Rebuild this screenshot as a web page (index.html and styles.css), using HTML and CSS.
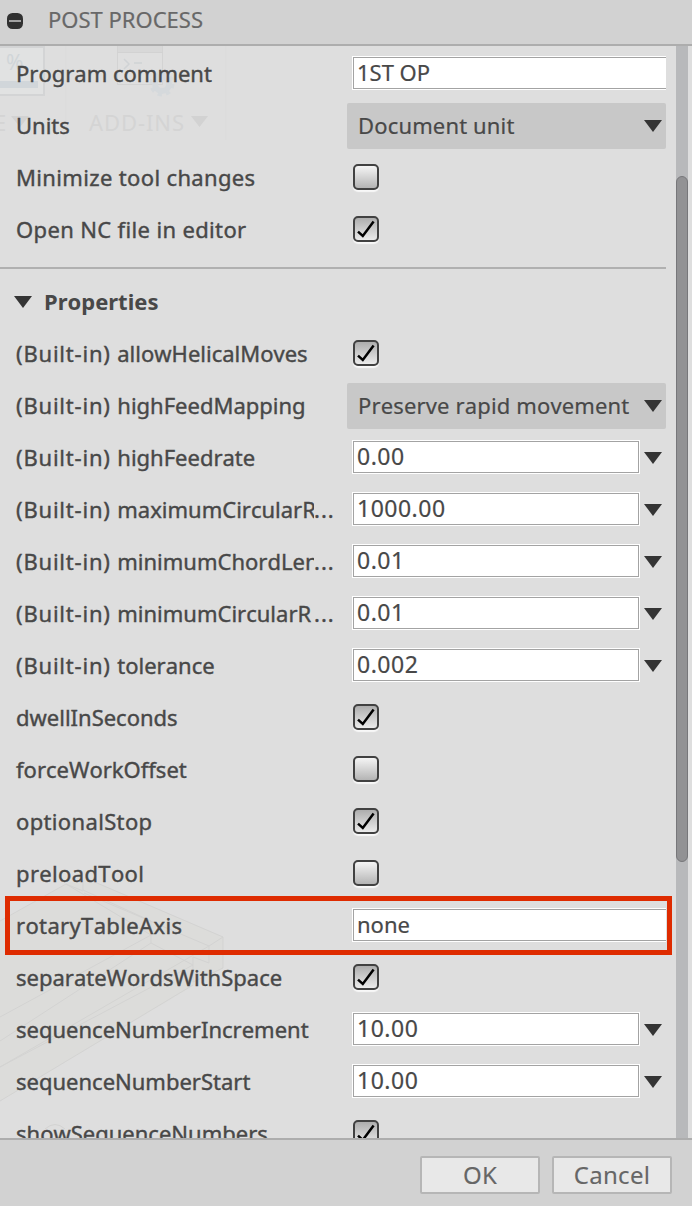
FILE: index.html
```html
<!DOCTYPE html>
<html lang="en">
<head>
    <meta charset="UTF-8">
    <meta name="viewport" content="width=device-width, initial-scale=1.0">
    <title>Post Process</title>
    <link rel="stylesheet" href="styles.css">
</head>
<body>

    <!-- Shared shapes -->
    <svg class="defs" width="0" height="0">
        <symbol id="arrow" viewBox="0 0 18 12"><path d="M0 0H18L9 12Z" fill="#343434"/></symbol>
        <symbol id="check" viewBox="0 0 22 22"><path d="M3 13.6L7.8 18L18.6 3.4" fill="none" stroke="#000" stroke-width="2.5"/></symbol>
    </svg>

    <div class="dialog">

        <!-- Header -->
        <div class="header">
            <svg class="collapse" width="16" height="16" viewBox="0 0 16 16">
                <rect width="16" height="16" rx="5.5" fill="#313131"/>
                <rect x="2" y="7" width="12" height="2" fill="#a2a2a2"/>
            </svg>
            <h1>POST PROCESS</h1>
        </div>

        <!-- Scrolling content -->
        <div class="content">

            <!-- Toolbar and model showing through the panel -->
            <svg class="ghost" width="676" height="1092" viewBox="0 46 676 1092">
                <path d="M0 47H44V95H0" fill="#e1e2e2" stroke="#d3d4d5" stroke-width="2"/>
                <rect y="81" width="38" height="7" fill="#d1d6da"/>
                <text x="6" y="70" font-size="21" fill="#d0d5d8">%</text>
                <path d="M66 46V140M226 46V140" stroke="#dbdbdb"/>
                <path d="M117.500 46V84.500H162.500V46" fill="#dfdfdf" stroke="#d3d3d3"/>
                <rect x="118" y="46" width="44" height="6" fill="#d8d8d8"/>
                <path d="M117 52.500H163" stroke="#d2d2d2"/>
                <path d="M124 59L129 64L124 69M134 63H142" fill="none" stroke="#d0d3d5" stroke-width="1.500"/>
                <circle cx="162" cy="84" r="7" fill="none" stroke="#d5d9dc" stroke-width="6"/>
                <circle cx="162" cy="84" r="11" fill="none" stroke="#d5d9dc" stroke-width="3" stroke-dasharray="4.320 4.320"/>
                <text x="-6" y="131" font-size="22" fill="#d4d4d4">E</text>
                <path d="M11 116H29L20 127ZM191 116H208L199.500 127Z" fill="#d2d2d2"/>
                <text x="89" y="131" font-size="22" textLength="95" fill="#d4d4d4">ADD-INS</text>
                <path d="M0 921L70 882L90 880L223 937V968L0 1101Z" fill="#dcdcda"/>
                <path d="M0 921L66 884L151 935L0 1017M83 880V890L151 921V943L0 1041M90 880L223 937V968M66 884L83 891M84 893L209 946V963L193 957M223 937L209 946L0 1067M151 943L193 965L0 1067M193 957V982L223 968M193 985L0 1101M45 1129Q55 1120 65 1129" fill="none" stroke="#d3d3d2"/>
            </svg>

            <div class="group">
                <div class="row">
                    <label>Program comment</label>
                    <div class="input wide"><span>1ST OP</span></div>
                </div>
                <div class="row">
                    <label>Units</label>
                    <div class="select"><span>Document unit</span><svg class="arrow"><use href="#arrow"/></svg></div>
                </div>
                <div class="row">
                    <label class="loose">Minimize tool changes</label>
                    <div class="checkbox"></div>
                </div>
                <div class="row">
                    <label class="loose">Open NC file in editor</label>
                    <div class="checkbox checked"><svg><use href="#check"/></svg></div>
                </div>
            </div>

            <div class="group properties">
                <div class="row title">
                    <svg class="arrow"><use href="#arrow"/></svg>
                    <h2>Properties</h2>
                </div>
                <div class="row">
                    <label><b>(Built-in) </b>allowHelicalMoves</label>
                    <div class="checkbox checked"><svg><use href="#check"/></svg></div>
                </div>
                <div class="row">
                    <label><b>(Built-in) </b>highFeedMapping</label>
                    <div class="select"><span>Preserve rapid movement</span><svg class="arrow"><use href="#arrow"/></svg></div>
                </div>
                <div class="row">
                    <label><b>(Built-in) </b>highFeedrate</label>
                    <div class="input number"><span>0.00</span></div>
                    <svg class="arrow"><use href="#arrow"/></svg>
                </div>
                <div class="row">
                    <label class="cut"><span><b>(Built-in) </b>maximumCircularR</span><i>...</i></label>
                    <div class="input number"><span>1000.00</span></div>
                    <svg class="arrow"><use href="#arrow"/></svg>
                </div>
                <div class="row">
                    <label class="cut"><span><b>(Built-in) </b>minimumChordLen</span><i>...</i></label>
                    <div class="input number"><span>0.01</span></div>
                    <svg class="arrow"><use href="#arrow"/></svg>
                </div>
                <div class="row">
                    <label class="cut"><span><b>(Built-in) </b>minimumCircularR</span><i>...</i></label>
                    <div class="input number"><span>0.01</span></div>
                    <svg class="arrow"><use href="#arrow"/></svg>
                </div>
                <div class="row">
                    <label><b>(Built-in) </b>tolerance</label>
                    <div class="input number"><span>0.002</span></div>
                    <svg class="arrow"><use href="#arrow"/></svg>
                </div>
                <div class="row">
                    <label>dwellInSeconds</label>
                    <div class="checkbox checked"><svg><use href="#check"/></svg></div>
                </div>
                <div class="row">
                    <label>forceWorkOffset</label>
                    <div class="checkbox"></div>
                </div>
                <div class="row">
                    <label class="loose">optionalStop</label>
                    <div class="checkbox checked"><svg><use href="#check"/></svg></div>
                </div>
                <div class="row">
                    <label class="loose">preloadTool</label>
                    <div class="checkbox"></div>
                </div>
                <div class="row highlight">
                    <label class="loose">rotaryTableAxis</label>
                    <div class="input wide"><span>none</span></div>
                </div>
                <div class="row">
                    <label>separateWordsWithSpace</label>
                    <div class="checkbox checked"><svg><use href="#check"/></svg></div>
                </div>
                <div class="row">
                    <label>sequenceNumberIncrement</label>
                    <div class="input number"><span>10.00</span></div>
                    <svg class="arrow"><use href="#arrow"/></svg>
                </div>
                <div class="row">
                    <label>sequenceNumberStart</label>
                    <div class="input number"><span>10.00</span></div>
                    <svg class="arrow"><use href="#arrow"/></svg>
                </div>
                <div class="row">
                    <label>showSequenceNumbers</label>
                    <div class="checkbox checked"><svg><use href="#check"/></svg></div>
                </div>
            </div>

            <div class="scrollbar"><div class="thumb"></div></div>
        </div>

        <!-- Footer -->
        <div class="footer">
            <div class="button">OK</div>
            <div class="button">Cancel</div>
        </div>
    </div>

</body>
</html>
```
FILE: styles.css
```css
* {
    box-sizing: border-box;
}
body {
    margin: 0;
    font-family: "Noto Sans", "Open Sans", sans-serif;
    font-size: 22px;
    font-kerning: none;
    color: #484848;
    background-color: #dedede;
}
.defs {
    display: none;
}
.dialog {
    display: flex;
    flex-direction: column;
    width: 692px;
    height: 1206px;
    overflow: hidden;
}
.header {
    display: flex;
    align-items: center;
    height: 46px;
    padding: 0 0 4px 7px;
    background-color: #d2d2d2;
    border-bottom: 2px solid #adadad;
}
.collapse {
    margin-top: 2px;
}
.header h1 {
    margin: 0 0 2px 25px;
    font-size: 22px;
    font-weight: normal;
    color: #686868;
    -webkit-text-stroke: 0.2px #686868;
}
.content {
    position: relative;
    height: 1092px;
    padding-top: 2px;
    overflow: hidden;
}
.ghost {
    position: absolute;
    top: 0;
    left: 0;
}
.group {
    position: relative;
    width: 666px;
}
.properties {
    margin-top: 11px;
    padding-top: 7px;
    border-top: 2px solid #b0b0b0;
}
.row {
    display: flex;
    align-items: center;
    height: 52px;
    padding-left: 16px;
    white-space: nowrap;
}
.row label {
    flex: none;
    width: 336px;
    padding-bottom: 2px;
    -webkit-text-stroke: 0.4px #484848;
}
.row label b {
    font-weight: normal;
    letter-spacing: 0.8px;
}
.row .loose {
    letter-spacing: 0.35px;
}
.row .cut {
    display: flex;
}
.cut span {
    width: 298px;
    overflow: hidden;
}
.cut i {
    font-style: normal;
    letter-spacing: 1px;
}
.title {
    padding-left: 14px;
}
.title h2 {
    margin: 0 0 2px 12px;
    font-size: 22px;
    font-weight: bold;
}
.arrow {
    flex: none;
    width: 18px;
    height: 12px;
}
.input {
    width: 288px;
    height: 34px;
    margin: 0 4px 2px 0;
    border: 1px solid #fff;
    background-color: #fff;
}
.input span {
    display: block;
    height: 32px;
    padding-left: 3px;
    line-height: 29px;
    border: 1px solid #a3a3a3;
    -webkit-text-stroke: 0.2px #484848;
}
.number {
    font-size: 23px;
    letter-spacing: 0.5px;
}
.wide {
    width: 314px;
    margin-right: 0;
    border-right: 0;
}
.wide span {
    border-right: 0;
}
.select {
    display: flex;
    align-items: center;
    justify-content: space-between;
    width: 319px;
    height: 46px;
    margin-left: -5px;
    padding: 0 4px 0 11px;
    border-radius: 2px;
    background-color: #c8c8c8;
}
.select span {
    padding-bottom: 2px;
    letter-spacing: 0.15px;
    -webkit-text-stroke: 0.2px #484848;
}
.checkbox {
    width: 26px;
    height: 26px;
    margin: 0 0 2px 1px;
    border: 2px solid #414141;
    border-radius: 5px;
    background: linear-gradient(#f5f5f5, #b4b4b4);
    box-shadow: 0 2px 1px #f8f8f8;
}
.checked {
    background: linear-gradient(#adadad, #ebebeb);
}
.checkbox svg {
    display: block;
    width: 22px;
    height: 22px;
}
/* red frame over the rotary axis row */
.highlight {
    position: relative;
}
.highlight::after {
    content: "";
    box-sizing: border-box;
    position: absolute;
    top: -4px;
    left: 5px;
    width: 667px;
    height: 59px;
    border: 5px solid #de2b00;
}
.scrollbar {
    position: absolute;
    top: 0;
    right: 4px;
    width: 12px;
    height: 1092px;
    padding-top: 130px;
    background-color: #b8b9bb;
}
.thumb {
    height: 686px;
    border: 1px solid #77777a;
    border-radius: 6px;
    background-color: #929294;
}
.footer {
    display: flex;
    justify-content: flex-end;
    gap: 12px;
    height: 68px;
    padding: 16px 20px 0 0;
    background-color: #d2d2d2;
    border-top: 2px solid #adadad;
}
.button {
    width: 120px;
    height: 38px;
    font-size: 24px;
    line-height: 34px;
    letter-spacing: 0.3px;
    text-align: center;
    color: #666;
    background-color: #e8e8e8;
    border: 2px solid #b6b6b6;
    border-radius: 2px;
    -webkit-text-stroke: 0.1px #666;
}
```
